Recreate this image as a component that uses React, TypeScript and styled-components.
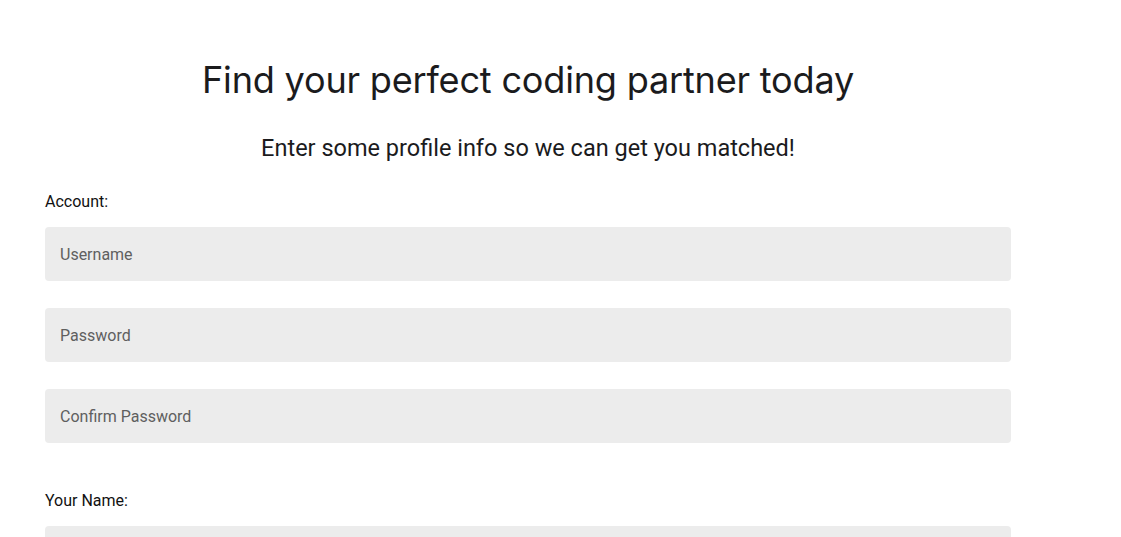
import React from "react";
import styled, { createGlobalStyle } from "styled-components";

const Global = createGlobalStyle`
  html, body { margin: 0; padding: 0; background: #ffffff; }
  body { font-family: Roboto, "Liberation Sans", sans-serif; }
`;

const Page = styled.main`
  width: 966px;
  margin-left: 45px;
  padding-top: 56px;
  display: flex;
  flex-direction: column;
`;

const Title = styled.h1`
  margin: 0;
  font-family: Inter, "Liberation Sans", sans-serif;
  font-weight: 400;
  font-size: 36.1px;
  line-height: 48px;
  color: #1b1b1d;
  text-align: center;
  letter-spacing: -0.2px;
`;

const Subtitle = styled.h2`
  margin: 28px 0 0;
  font-family: Roboto, "Liberation Sans", sans-serif;
  font-weight: 400;
  font-size: 23.5px;
  line-height: 32px;
  color: #1b1b1d;
  text-align: center;
`;

const Section = styled.section<{ $top: number }>`
  margin-top: ${(p) => p.$top}px;
  display: flex;
  flex-direction: column;
  gap: 27px;
`;

const Label = styled.label`
  font-size: 16px;
  line-height: 20px;
  color: #111;
  margin-bottom: -12px;
`;

const Input = styled.input`
  box-sizing: border-box;
  width: 100%;
  height: 54px;
  border: none;
  border-radius: 4px;
  background: #ececec;
  padding: 0 15px;
  font-family: Roboto, "Liberation Sans", sans-serif;
  font-size: 16px;
  color: #222;
  outline: none;
  &::placeholder { color: #5f5f5f; }
`;

export default function App() {
  return (
    <>
      <Global />
      <Page>
        <Title>Find your perfect coding partner today</Title>
        <Subtitle>Enter some profile info so we can get you matched!</Subtitle>
        <Section $top={28}>
          <Label>Account:</Label>
          <Input placeholder="Username" />
          <Input type="password" placeholder="Password" />
          <Input type="password" placeholder="Confirm Password" />
        </Section>
        <Section $top={48}>
          <Label>Your Name:</Label>
          <Input placeholder="First Name" />
        </Section>
      </Page>
    </>
  );
}
